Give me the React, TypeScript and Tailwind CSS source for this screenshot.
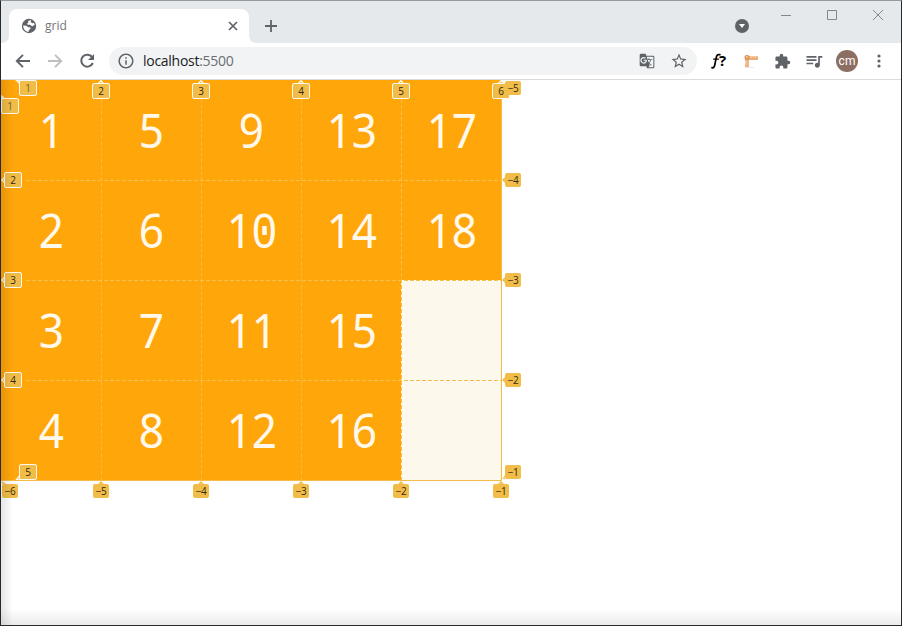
import { MdExtension, MdQueueMusic, MdStarBorder, MdInfoOutline, MdGTranslate } from "react-icons/md";

const items = Array.from({ length: 18 }, (_, i) => i + 1);

type Marker = { text: string; x: number; y: number; front: boolean; d: string; faint?: boolean };

const markers: Marker[] = [
  { text: "1", x: 18, y: 0, front: true, d: "M15.5 0.5H19V4Z", faint: true },
  { text: "2", x: 91, y: 3, front: true, d: "M97 4L100 0.5L103 4Z" },
  { text: "3", x: 191, y: 3, front: true, d: "M197 4L200 0.5L203 4Z" },
  { text: "4", x: 291, y: 3, front: true, d: "M297 4L300 0.5L303 4Z" },
  { text: "5", x: 391, y: 3, front: true, d: "M397 4L400 0.5L403 4Z" },
  { text: "6", x: 491, y: 3, front: true, d: "M497 4L500 0.5L503 4Z" },
  { text: "1", x: 0, y: 18, front: true, d: "M0 15.5V19H4Z", faint: true },
  { text: "2", x: 3, y: 92, front: true, d: "M4 97L0.5 100L4 103Z" },
  { text: "3", x: 3, y: 192, front: true, d: "M4 197L0.5 200L4 203Z" },
  { text: "4", x: 3, y: 292, front: true, d: "M4 297L0.5 300L4 303Z" },
  { text: "5", x: 18, y: 384, front: true, d: "M15.5 399.5H19V395Z" },
  { text: "−6", x: 1, y: 404, front: false, d: "M1 404V401L5 404Z" },
  { text: "−5", x: 92, y: 404, front: false, d: "M97 404L100 401L103 404Z" },
  { text: "−4", x: 192, y: 404, front: false, d: "M197 404L200 401L203 404Z" },
  { text: "−3", x: 292, y: 404, front: false, d: "M297 404L300 401L303 404Z" },
  { text: "−2", x: 392, y: 404, front: false, d: "M397 404L400 401L403 404Z" },
  { text: "−1", x: 492, y: 404, front: false, d: "M497 404L500 401L503 404Z" },
  { text: "−5", x: 504, y: 1, front: false, d: "M504 15H508V17H501Z" },
  { text: "−4", x: 504, y: 93, front: false, d: "M504 97L501 100L504 103Z" },
  { text: "−3", x: 504, y: 193, front: false, d: "M504 197L501 200L504 203Z" },
  { text: "−2", x: 504, y: 293, front: false, d: "M504 297L501 300L504 303Z" },
  { text: "−1", x: 504, y: 385, front: false, d: "M501.5 399L504 395V399Z" },
];

function GridLines() {
  return (
    <svg width="530" height="430" className="pointer-events-none absolute left-0 top-0" fill="none">
      <rect x="400" y="200" width="100" height="200" fill="#fdf8ec" />
      <path d="M400.5 200V400M400 200.5H500" stroke="#fffdf5" />
      <g stroke="#f3c04c" strokeDasharray="4 2">
        {[100, 200, 300, 400].map((x) => (
          <path key={x} d={`M${x + 0.5} 19V400`} opacity={x === 400 ? 1 : 0.8} />
        ))}
        <path d="M25 100.5H501M25 200.5H501M25 300.5H501" />
      </g>
      <path d="M500.5 0V400.5H0" stroke="#f1bd48" />
      {markers.map((m, i) => (
        <path key={i} d={m.d} fill="#f1bd48" stroke={m.front ? "#fff8e8" : "#f8dda0"} strokeWidth={m.front ? 1.2 : 0.5} />
      ))}
    </svg>
  );
}

function GridMarker({ m }: { m: Marker }) {
  return (
    <div
      style={{ left: m.x, top: m.y }}
      className={`absolute flex items-center justify-center rounded-[2px] bg-[#f1bd48] font-['Open_Sans',sans-serif] text-[10px] leading-none ${
        m.front ? "h-4 w-[18px] border border-[#fffaf0]" : "h-3.5 w-4 tracking-[-0.5px]"
      } ${m.faint ? "text-[#806427]" : "text-[#33290f]"}`}
    >
      <span>{m.text}</span>
    </div>
  );
}

function TabStrip() {
  return (
    <header className="relative flex h-[42px] shrink-0 bg-[#e5e9ec] pl-2 pt-2">
      <div className="flex h-[34px] w-60 items-center rounded-t-lg bg-white pl-3 pr-2">
        <svg width="16" height="16" viewBox="0 0 16 16" className="-mt-px">
          <circle cx="8" cy="8" r="7.2" fill="#5f6368" />
          <path d="M7 3.1 10.2 2.1 9.6 3.9 11.4 5.2 13 4.8 13.7 7 11.2 8.2 8.9 6.8 6.6 6.7 6.2 5.2 7.5 4.7Z" fill="white" />
          <path d="M2.1 7.4 5.2 7.8 7.4 9.2 9.6 9.4 9.4 11 8 11.8 7.4 13.9C4.6 13.6 2.2 11 2.1 7.4Z" fill="white" />
        </svg>
        <span className="ml-2 -mt-px font-['Open_Sans',sans-serif] text-xs text-[#73777b]">grid</span>
        <svg width="16" height="16" className="ml-auto" fill="none" stroke="#5f6368" strokeWidth="1.7">
          <path d="m4 4 8 8m0-8-8 8" />
        </svg>
      </div>
      <svg width="8" height="8" className="self-end" fill="#fff"><path d="M0 0Q0 8 8 8H0Z" /></svg>
      <svg width="8" height="8" className="absolute bottom-0 left-0" fill="#fff"><path d="M8 0Q8 8 0 8H8Z" /></svg>
      <svg width="14" height="14" className="ml-[7px] mt-[10px]" fill="none" stroke="#5f6368" strokeWidth="1.8">
        <path d="M7 1v12M1 7h12" />
      </svg>
      <div className="ml-auto flex">
        <div className="mr-8 mt-[10px] flex size-3.5 items-center justify-center rounded-full bg-[#5f6368] text-white">
          <svg width="8" height="6" fill="currentColor"><path d="M1 1H7L4 5Z" /></svg>
        </div>
        <svg width="120" height="14" fill="none" stroke="#85888b">
          <path d="M0 6.5h10M46.5 1.5h9v9h-9ZM92 1l10 10m0-10L92 11" />
        </svg>
      </div>
    </header>
  );
}

function Toolbar() {
  return (
    <div className="flex h-9 shrink-0 items-center bg-white text-[#5f6368]">
      <svg width="20" height="20" className="ml-3" fill="none" stroke="currentColor" strokeWidth="1.9">
        <path d="M17 10H4.5M10 3.8 3.8 10l6.2 6.2" />
      </svg>
      <svg width="20" height="20" className="ml-3 text-[#bdbfc1]" fill="none" stroke="currentColor" strokeWidth="1.9">
        <path d="M3 10h12.5M10 3.8l6.2 6.2-6.2 6.2" />
      </svg>
      <svg width="20" height="20" className="ml-3" fill="none" stroke="currentColor" strokeWidth="2">
        <path d="M15.4 6.5A6 6 0 1 0 15.8 12" />
        <path d="M17 3v6h-6Z" fill="currentColor" stroke="none" />
      </svg>
      <div className="ml-3 flex h-7 w-[588px] items-center rounded-full bg-[#f1f3f4] pl-2 pr-[9px]">
        <MdInfoOutline size={18} />
        <span className="ml-2 font-['Open_Sans',sans-serif] text-sm tracking-[-0.28px] text-[#202124]">
          localhost<span className="text-[#6b6e72]">:5500</span>
        </span>
        <MdGTranslate size={16} className="ml-auto" />
        <MdStarBorder size={18} className="ml-[15px]" />
      </div>
      <div className="ml-3.5 flex h-5 w-[18px] items-center font-['Open_Sans',sans-serif] leading-none text-black">
        <svg width="10" height="18" fill="none" stroke="currentColor" strokeLinecap="round">
          <path d="M1 15.6Q3 16.5 3.8 12.7L5.3 5.3Q5.9 2 8.8 2.7" strokeWidth="1.7" />
          <path d="M2.6 7.1H7.5" strokeWidth="1.2" />
        </svg>
        <b className="-ml-0.5 -mt-0.5 text-[15px]">?</b>
      </div>
      <svg width="16" height="16" className="ml-3.5" viewBox="0 0 16 16">
        <path d="M2 14h9v1H2Z" fill="#eeeae8" />
        <rect x="4" y="3" width="11" height="4" fill="#e8ad79" />
        <rect x="2" y="3" width="4" height="11" fill="#edb784" />
        <rect x="1.5" y="2" width="5" height="5" rx="2" fill="#df955a" />
        <path d="M3 4h2M8 3v2m2-2v1m2-1v2m2-2v1M2 9h2M2 11h1" stroke="#ffe0b7" fill="none" />
      </svg>
      <MdExtension size={17} className="ml-[15px]" />
      <MdQueueMusic size={20} className="ml-[13px]" />
      <div className="ml-3 flex size-[22px] items-center justify-center rounded-full bg-[#8d6e63] font-['Roboto',sans-serif] text-[12px] text-white">cm</div>
      <svg width="4" height="14" className="ml-[19px]" fill="currentColor">
        <circle cx="2" cy="2" r="1.6" /><circle cx="2" cy="7" r="1.6" /><circle cx="2" cy="12" r="1.6" />
      </svg>
    </div>
  );
}

export default function App() {
  return (
    <div className="flex h-[626px] w-[902px] flex-col overflow-hidden border border-[#29292b] border-t-[#98999d]">
      <TabStrip />
      <Toolbar />
      <main className="relative min-h-0 flex-1 border-t border-[#d9dbdd] bg-white">
        <div className="relative">
          <div className="grid w-[500px] auto-cols-[100px] grid-flow-col grid-rows-[repeat(4,100px)]">
            {items.map((n) => (
              <div key={n} className="flex items-center justify-center bg-[#ffa60a] pl-px font-['Noto_Sans',sans-serif] text-[48px] leading-none text-[#fff9eb]">
                {String(n).split("").map((digit, i) => (
                  <span key={i} className="relative flex w-[25px] scale-x-92 justify-center">
                    {digit}
                    {digit === "0" && <i className="absolute left-2.5 top-5 h-[9px] w-[5px] bg-[#fff9eb]" />}
                  </span>
                ))}
              </div>
            ))}
          </div>
          <GridLines />
          {markers.map((m, i) => <GridMarker key={i} m={m} />)}
        </div>
        <div className="pointer-events-none absolute inset-x-0 bottom-0 h-4 bg-linear-to-b from-transparent to-black/8" />
        <div className="pointer-events-none absolute inset-y-0 left-0 w-3 bg-linear-to-r from-black/10 to-transparent" />
      </main>
    </div>
  );
}
